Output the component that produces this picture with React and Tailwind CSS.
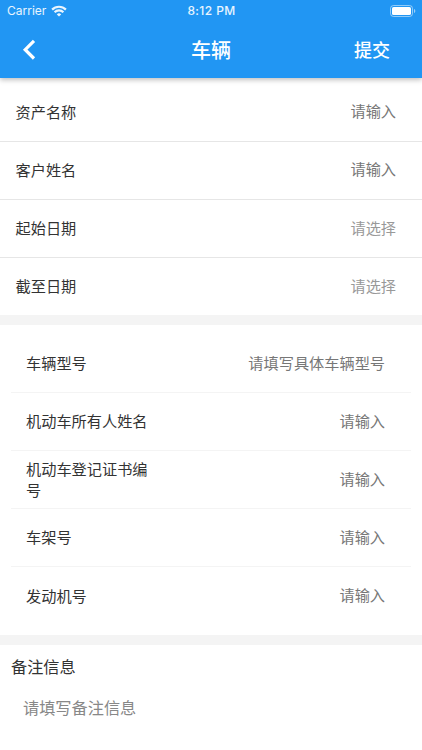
const BASIC_FIELDS = [
  { label: '资产名称', hint: '请输入', type: 'input' },
  { label: '客户姓名', hint: '请输入', type: 'input' },
  { label: '起始日期', hint: '请选择', type: 'select' },
  { label: '截至日期', hint: '请选择', type: 'select' },
];

const VEHICLE_FIELDS = [
  { label: '车辆型号', hint: '请填写具体车辆型号' },
  { label: '机动车所有人姓名', hint: '请输入' },
  { label: '机动车登记证书编号', hint: '请输入' },
  { label: '车架号', hint: '请输入' },
  { label: '发动机号', hint: '请输入' },
];

function StatusBar() {
  return (
    <div className="grid h-[22px] grid-cols-3 items-center pr-[6px] pl-[7px] text-[12px] leading-none text-white/90">
      <div className="flex items-center gap-[5px]">
        <span className="text-[12px]">Carrier</span>
        <svg viewBox="0 0 16 12" className="h-[12px] w-[16px]" fill="none" stroke="currentColor" strokeWidth="2.2">
          <path d="M1.1 4.600a9.800 9.800 0 0 1 13.800 0" />
          <path d="M3.600 7.300a6.200 6.200 0 0 1 8.800 0" />
          <path d="M8 11.600 5.800 9.400a3.100 3.100 0 0 1 4.400 0Z" fill="currentColor" stroke="none" />
        </svg>
      </div>
      <span className="text-center font-medium tracking-[0.4px]">8:12 PM</span>
      <svg viewBox="0 0 26 12" className="h-[12px] w-[26px] justify-self-end">
        <rect x="0.5" y="0.5" width="22" height="11" rx="3" fill="none" stroke="white" strokeOpacity="0.5" />
        <rect x="2" y="2" width="19" height="8" rx="1.6" fill="white" />
        <path d="M24 4v4c.8-.3 1.3-1.1 1.3-2S24.800 4.300 24 4Z" fill="white" fillOpacity="0.55" />
      </svg>
    </div>
  );
}

function NavBar() {
  return (
    <div className="grid h-14 grid-cols-3 items-center text-white">
      <button className="ml-[22px] w-4" aria-label="返回">
        <svg viewBox="0 0 14 22" className="h-[22px] w-[14px]" fill="none" stroke="currentColor" strokeWidth="3.2">
          <path d="M12 1.900 3.200 10.700 12 19.500" />
        </svg>
      </button>
      <h1 className="pt-px text-center text-[20px] leading-6 font-medium">车辆</h1>
      <button className="mr-[32px] justify-self-end pt-px text-[18px] leading-6 font-medium">提交</button>
    </div>
  );
}

export default function App() {
  return (
    <main className="flex h-[750px] w-[422px] flex-col overflow-hidden bg-white font-['Inter','Noto_Sans_CJK_SC',sans-serif] text-[#333333]">
      <header className="z-10 h-[78px] shrink-0 bg-[#2196f3] shadow-[0_2px_5px_rgba(0,0,0,0.25)]">
        <StatusBar />
        <NavBar />
      </header>

      <section className="shrink-0 pt-[6px] text-[15.2px]">
        {BASIC_FIELDS.map(f => (
          <div key={f.label} className="flex h-[58px] items-center justify-between border-b border-[#e6e6e6] pt-[2px] pr-[26px] pl-[15.5px] last:h-[57px] last:border-b-0">
            <span>{f.label}</span>
            <span className={f.type === 'input' ? 'pb-[2px] text-[#777777]' : 'text-[#999999]'}>{f.hint}</span>
          </div>
        ))}
      </section>

      <div className="h-[10px] shrink-0 bg-[#f4f4f4]" />

      <section className="shrink-0 px-[11px] py-[10px] text-[15.2px]">
        {VEHICLE_FIELDS.map(f => (
          <div key={f.label} className="flex h-[58px] items-center justify-between border-b border-[#f4f4f4] pt-[2px] pr-[26px] pl-[15px] last:border-b-0">
            <span className="w-[124px] pb-[1.5px] leading-[21px]">{f.label}</span>
            <span className="pb-px text-[#777777]">{f.hint}</span>
          </div>
        ))}
      </section>

      <div className="h-[10px] shrink-0 bg-[#f4f4f4]" />

      <section className="px-[11px] pt-[10px]">
        <h2 className="text-[16.2px] leading-6">备注信息</h2>
        <p className="mt-[17px] pl-3 text-[16.2px] leading-6 text-[#888888]">请填写备注信息</p>
      </section>
    </main>
  );
}
